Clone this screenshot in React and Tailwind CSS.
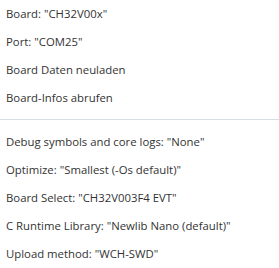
import React from 'react';

const App = () => {
  const boardItems = [
    'Board: "CH32V00x"',
    'Port: "COM25"',
    'Board Daten neuladen',
    'Board-Infos abrufen',
  ];

  const optionItems = [
    'Debug symbols and core logs: "None"',
    'Optimize: "Smallest (-Os default)"',
    'Board Select: "CH32V003F4 EVT"',
    'C Runtime Library: "Newlib Nano (default)"',
    'Upload method: "WCH-SWD"',
  ];

  return (
    <div className="w-[279px] h-[268px] bg-white text-[#333333] text-[11.35px] font-['Open_Sans',sans-serif] overflow-hidden">
      {/* Board section */}
      <div className="flex flex-col">
        {boardItems.map((item) => (
          <div key={item} className="h-[28px] flex items-center pl-[6px] whitespace-nowrap">
            {item}
          </div>
        ))}
      </div>

      {/* Separator */}
      <div className="mt-[7px] mb-[8px] h-px bg-[#d6dee5]" />

      {/* Tool options */}
      <div className="flex flex-col">
        {optionItems.map((item) => (
          <div key={item} className="h-[28px] flex items-center pl-[6px] whitespace-nowrap">
            {item}
          </div>
        ))}
      </div>
    </div>
  );
};

export default App;
